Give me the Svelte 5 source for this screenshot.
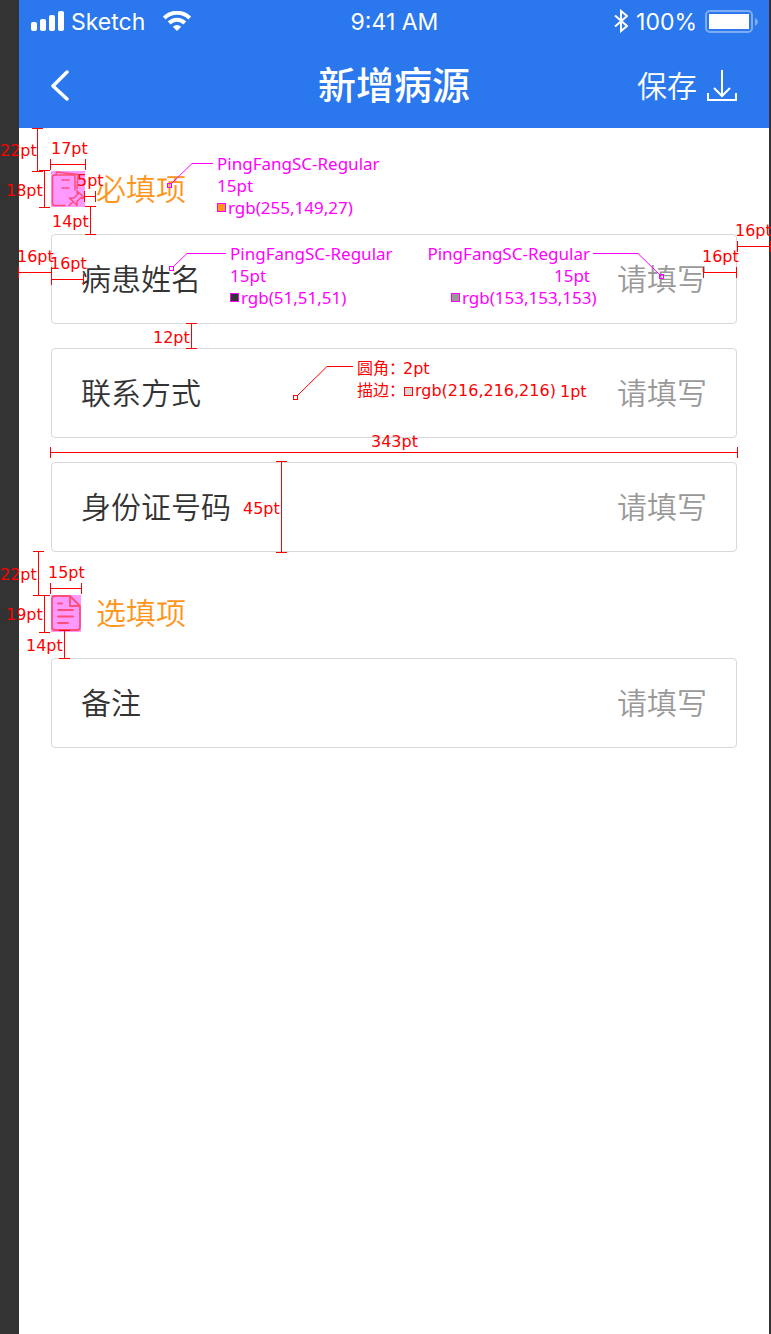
<script>
  const sections = [
    {
      title: '必填项',
      icon: 'required',
      fields: [
        { id: 'name', label: '病患姓名' },
        { id: 'contact', label: '联系方式' },
        { id: 'idcard', label: '身份证号码' }
      ]
    },
    {
      title: '选填项',
      icon: 'optional',
      fields: [{ id: 'remark', label: '备注' }]
    }
  ];

  // Horizontal dimension: x1, x2, y.  Vertical dimension: y1, y2, x.
  const across = [
    [50, 85, 164],
    [84, 95, 196],
    [18, 51, 272],
    [51, 83, 279],
    [50, 81, 588]
  ];
  const down = [
    [128, 171, 37],
    [170, 207, 44],
    [206, 234, 90],
    [323, 348, 191],
    [461, 552, 281],
    [551, 595, 38],
    [595, 632, 44],
    [630, 658, 64]
  ];
  const acrossRight = [
    [-34, -1, 246],
    [-68, -35, 272]
  ];
  const notes = [
    [0, 156, '22pt'],
    [51, 154, '17pt'],
    [6, 196, '18pt'],
    [77, 186, '5pt'],
    [52, 227, '14pt'],
    [17, 262, '16pt'],
    [50, 269, '16pt'],
    [153, 343, '12pt'],
    [371, 447, '343pt'],
    [243, 514, '45pt'],
    [0, 580, '22pt'],
    [48, 578, '15pt'],
    [6, 620, '19pt'],
    [26, 651, '14pt'],
    [357, 374, '圆角：'],
    [403, 374, '2pt'],
    [357, 396, '描边：'],
    [415, 396, 'rgb(216,216,216)'],
    [560, 397, '1pt']
  ];
  const notesRight = [
    [-36, 236, '16pt'],
    [-69, 262, '16pt']
  ];
</script>

<div class="page">
  <div class="phone">
    <header>
      <div class="status">
        <div class="side">
          <svg class="signal" width="34" height="20" viewBox="0 0 34 20" fill="#fff" aria-hidden="true">
            <rect x="0" y="11" width="6" height="9" rx="2" />
            <rect x="9" y="8" width="6" height="12" rx="2" />
            <rect x="18" y="4" width="6" height="16" rx="2" />
            <rect x="27" y="0" width="6" height="20" rx="2" />
          </svg>
          <span class="carrier">Sketch</span>
          <svg class="wifi" width="28" height="20" viewBox="0 0 28 20" aria-hidden="true">
            <g fill="none" stroke="#fff" stroke-width="4">
              <path d="M1.3 7a18 18 0 0 1 25.4 0" />
              <path d="M6.2 12a11 11 0 0 1 15.6 0" />
            </g>
            <path d="M14 20l-4.2-4.2a6 6 0 0 1 8.4 0z" fill="#fff" />
          </svg>
        </div>
        <time>9:41 AM</time>
        <div class="side end">
          <svg width="14" height="24" viewBox="0 0 14 24" fill="none" stroke="#fff" stroke-width="2" aria-hidden="true">
            <path d="M1 6.5l12 10.5-6 5V2l6 5L1 17.5" />
          </svg>
          <span class="level">100%</span>
          <svg width="53" height="23" viewBox="0 0 53 23" aria-hidden="true">
            <rect x="1" y="1" width="46" height="21" rx="4" fill="none" stroke="#fff" stroke-opacity=".4" stroke-width="2" />
            <rect x="4" y="4" width="40" height="15" fill="#fff" />
            <path d="M50 8q3 1.500 3 4t-3 4z" fill="#fff" fill-opacity=".4" />
          </svg>
        </div>
      </div>
      <nav>
        <button class="back" aria-label="返回">
          <svg width="20" height="32" viewBox="0 0 20 32" fill="none" stroke="#fff" stroke-width="3.500" stroke-linecap="round" stroke-linejoin="round">
            <path d="M16 3L2 17l14 13" />
          </svg>
        </button>
        <h1>新增病源</h1>
        <button class="save">
          <span>保存</span>
          <svg width="30" height="32" viewBox="0 0 30 32" fill="none" stroke="#fff" stroke-width="2">
            <path d="M15 1v26M7 19l8 8 8-8M1 24v7h28v-7" />
          </svg>
        </button>
      </nav>
    </header>

    <main>
      {#each sections as section}
        <section>
          <h2>
            <span class="icon">
              {#if section.icon === 'required'}
                <svg width="34" height="36" viewBox="0 0 34 36" fill="none" stroke="#ff4d7a" stroke-width="1.500" stroke-linejoin="round" stroke-linecap="round">
                  <rect width="34" height="36" fill="#ff99ff" stroke="none" />
                  <path d="M14 34.500H3.500a2 2 0 0 1-2-2V6a2 2 0 0 1 2-2H22a2 2 0 0 1 2 2v13M5 4l.5-3L27 3.500 26 18M11 9h7M11 17h7" />
                  <path d="M26 20l7 6.500-2 1-1-1-4 4v4L18.500 27h4.500l4-4-1-1zM22 31l-4 3.500" />
                </svg>
              {:else}
                <svg width="30" height="37" viewBox="0 0 30 37" fill="none" stroke="#ff4d7a" stroke-width="1.800" stroke-linejoin="round" stroke-linecap="round">
                  <rect width="30" height="37" fill="#ff99ff" stroke="none" />
                  <path d="M19 1H4a3 3 0 0 0-3 3v28a3 3 0 0 0 3 3h22a3 3 0 0 0 3-3V11zM19 1v10h10M7 8.500h4M7 15h15M7 21.500h15M7 28h10" />
                </svg>
              {/if}
            </span>
            <span class="title">{section.title}</span>
          </h2>
          <div class="fields">
            {#each section.fields as field}
              <div class="field">
                <label for={field.id}>{field.label}</label>
                <input id={field.id} type="text" placeholder="请填写" />
              </div>
            {/each}
          </div>
        </section>
      {/each}
    </main>
  </div>

  {#snippet ruler(a, b, at, vertical)}
    {#if vertical}
      <path d="M{at + 0.5} {a}V{b}M{at - 5} {a + 0.5}h11M{at - 5} {b + 0.5}h11" />
    {:else}
      <path d="M{a} {at + 0.5}H{b}M{a + 0.5} {at - 5}v11M{b + 0.5} {at - 5}v11" />
    {/if}
  {/snippet}

  <svg class="overlay">
    <g class="lines">
      {#each across as [a, b, y]}{@render ruler(a, b, y, false)}{/each}
      {#each down as [a, b, x]}{@render ruler(a, b, x, true)}{/each}
      <path d="M50.500 447v11" />
      <svg x="-33" overflow="visible">
        <line x1="83" x2="100%" y1="452.500" y2="452.500" />
      </svg>
      <path d="M297 396L327 366.500H353" />
      <rect x="293.500" y="395.500" width="4" height="4" fill="#fff" />
      <rect x="404.500" y="387.500" width="8" height="8" fill="#d8d8d8" />
    </g>
    <g class="note">
      {#each notes as [x, y, text]}<text {x} {y}>{text}</text>{/each}
    </g>
    <g class="lines spec">
      <path d="M171 184L192 163.500H213M173 267L187 253.500H226" />
      <rect x="167.500" y="183.500" width="4" height="4" />
      <rect x="169.500" y="266.500" width="4" height="4" fill="#fff" />
      <rect x="217.500" y="203.500" width="8" height="8" fill="#ff951b" />
      <rect x="230.500" y="293.500" width="8" height="8" fill="#333" />
    </g>
    <g class="note spec">
      <text x="217" y="170">PingFangSC-Regular</text>
      <text x="217" y="192">15pt</text>
      <text x="228" y="214">rgb(255,149,27)</text>
      <text x="230" y="260">PingFangSC-Regular</text>
      <text x="230" y="282">15pt</text>
      <text x="241" y="304">rgb(51,51,51)</text>
    </g>
    <svg x="100%" overflow="visible">
      <g class="lines">
        <path d="M-33.500 447v11" />
        {#each acrossRight as [a, b, y]}{@render ruler(a, b, y, false)}{/each}
      </g>
      <g class="note">
        {#each notesRight as [x, y, text]}<text {x} {y}>{text}</text>{/each}
      </g>
      <g class="lines spec">
        <path d="M-178 253.500H-133L-110 276" />
        <rect x="-111.500" y="274.500" width="4" height="4" />
        <rect x="-319.500" y="293.500" width="8" height="8" fill="#999" />
      </g>
      <g class="note spec">
        <text class="right" x="-181" y="260">PingFangSC-Regular</text>
        <text class="right" x="-181" y="282">15pt</text>
        <text x="-309" y="304">rgb(153,153,153)</text>
      </g>
    </svg>
  </svg>
</div>

<style>
  :global(body) {
    margin: 0;
    background: #333;
  }
  .page {
    position: relative;
    overflow: hidden;
    min-height: 100vh;
    box-sizing: border-box;
    padding: 0 2px 0 19px;
    display: flex;
    background: #333;
    font-family: 'Noto Sans CJK SC', sans-serif;
  }
  .phone {
    flex: 1;
    background: #fff;
  }
  header {
    background: #2a77ee;
    color: #fff;
  }
  .status {
    display: grid;
    grid-template-columns: 1fr auto 1fr;
    align-items: center;
    height: 42px;
    padding: 0 11px 0 12px;
    font-family: Inter, sans-serif;
    font-size: 23px;
    line-height: 28px;
    font-weight: 400;
  }
  .status span,
  .status time {
    padding-top: 2px;
  }
  .side {
    display: flex;
    align-items: center;
    gap: 6px;
  }
  .wifi {
    margin-left: 12px;
  }
  .end {
    justify-content: flex-end;
    gap: 8px;
  }
  nav {
    display: grid;
    grid-template-columns: 1fr auto 1fr;
    align-items: center;
    height: 86px;
    padding: 0 32px;
  }
  button {
    display: flex;
    align-items: center;
    padding: 0;
    border: 0;
    background: none;
    color: inherit;
    font: inherit;
  }
  h1 {
    margin: 0;
    padding-bottom: 4px;
    font-size: 38px;
    line-height: 48px;
    font-weight: 500;
  }
  .save {
    justify-self: end;
    gap: 10px;
    font-size: 30px;
    line-height: 40px;
    font-weight: 350;
  }
  .save span {
    padding-bottom: 2px;
  }
  main {
    padding: 0 32px;
  }
  section {
    padding-top: 40px;
  }
  h2 {
    display: flex;
    align-items: center;
    margin: 0;
    height: 42px;
    color: #ff951b;
    font-size: 30px;
    line-height: 40px;
    font-weight: 350;
  }
  .icon {
    display: flex;
    width: 45px;
  }
  .title {
    padding-bottom: 4px;
  }
  .fields {
    display: grid;
    gap: 24px;
    padding-top: 24px;
  }
  .field {
    display: flex;
    align-items: center;
    height: 90px;
    box-sizing: border-box;
    padding: 0 29px 4px;
    border: 1px solid #d8d8d8;
    border-radius: 4px;
    font-size: 30px;
    line-height: 44px;
    font-weight: 350;
    color: #333;
  }
  label {
    flex: none;
  }
  input {
    flex: 1;
    min-width: 0;
    padding: 0;
    border: 0;
    outline: 0;
    background: none;
    color: inherit;
    font: inherit;
    text-align: right;
  }
  input::placeholder {
    color: #999;
    opacity: 1;
  }
  .overlay {
    position: absolute;
    inset: 0;
    width: 100%;
    height: 100%;
    pointer-events: none;
  }
  .lines {
    fill: none;
    stroke: #f00;
    stroke-width: 1;
  }
  .lines.spec {
    stroke: #f0f;
  }
  .note {
    fill: #f00;
    font-family: 'DejaVu Sans', 'Noto Sans CJK SC', sans-serif;
    font-size: 16px;
  }
  .note.spec {
    fill: #f0f;
    font-family: 'Noto Sans', sans-serif;
    font-size: 17px;
  }
  .right {
    text-anchor: end;
  }
</style>
